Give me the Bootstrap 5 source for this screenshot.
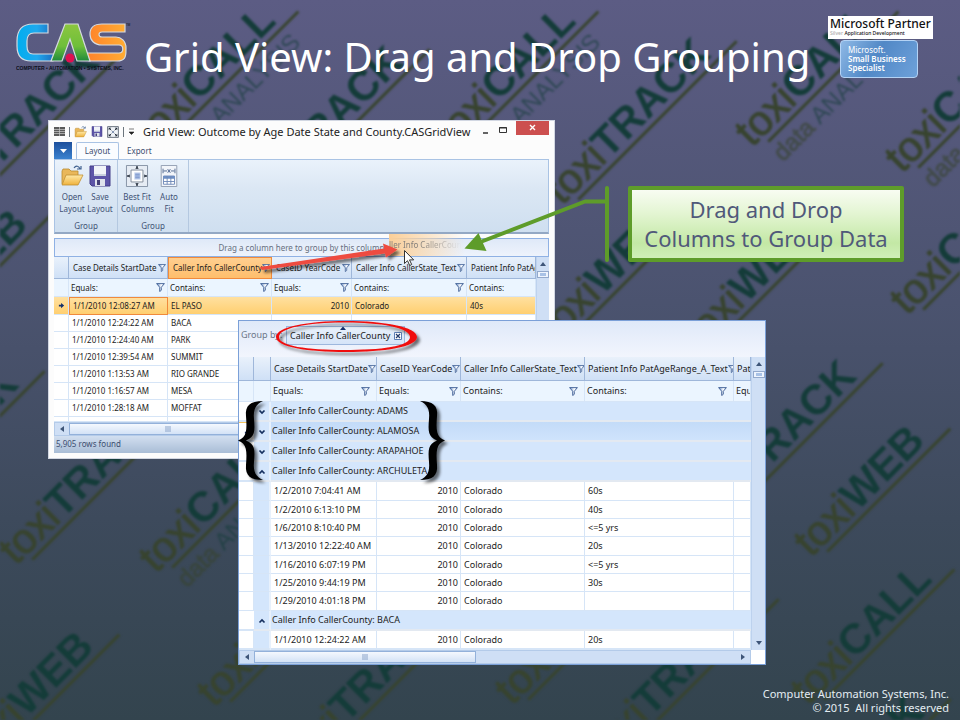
<!DOCTYPE html>
<html lang="en">
<head>
<meta charset="utf-8">
<meta name="viewport" content="width=device-width, initial-scale=1">
<title>Grid View: Drag and Drop Grouping</title>
<link href="https://cdn.jsdelivr.net/npm/bootstrap@5.3.0/dist/css/bootstrap.min.css" rel="stylesheet">
<style>
body{font-family:"Noto Sans","Open Sans",sans-serif;background:#34444f}
.slide{min-height:100vh;background:linear-gradient(#5c5c84,#4b536f 42%,#3d4a5c 72%,#33444e);isolation:isolate}
.watermark{inset:0;z-index:-1;pointer-events:none;filter:blur(1px)}
.wm-a{fill:#38442f;stroke:#38442f;stroke-width:1}
.wm-b{fill:#143c39;font-weight:700}
.wm-c{fill:#143c39}
.slide-head{padding:16px 27px 0 16px}
.slide-head h1{font-size:40px;line-height:50px;color:#fff;font-weight:400;margin:16px 0 0 12px}
.brand{margin-top:6px}
.partner{background:#fff;color:#111;width:105px;height:23px;padding:2px 2px 0;line-height:12px;font-size:12px;font-weight:500}
.partner small{display:block;font-size:5px;line-height:7px;font-weight:500}
.partner i{font-style:normal;color:#aaa}
.specialist{width:78px;height:38px;margin:1px auto 0 12px;padding:4px 7px;border:1px solid #b4d3f5;border-radius:4px;background:linear-gradient(120deg,#8fb9e6,#5188c6 45%,#6ea1da);color:#fff;font-size:8px;line-height:9px;font-weight:600}
.specialist span{font-weight:400}
.slide-foot{padding:0 11px 5px;color:#e4edf3;font-size:11px;line-height:14px}
.win{line-height:12px;color:#222}
.win-a{left:48px;top:120px;width:507px;background:#fcfcfc;border:1px solid #d2d7e2;padding:0 5px 5px;font-size:8px}
.win-b{left:238px;top:320px;width:528px;background:#fff;border:1px solid #7ba0d8;font-size:9px}
.win button{font:inherit;color:inherit}
.titlebar{height:21px}
.titlebar .caption{font-size:11px;color:#222}
.close-btn{background:#cc4f4f;width:33px;height:14px;color:#fff!important}
.tabs{height:17px;color:#3c4e70}
.start-btn{width:18px;background:linear-gradient(#1d4f9c,#3b82cf)}
.tab-on{width:43px;border:1px solid #a9c3e4!important;border-bottom:0!important;background:#fafcff!important;border-radius:2px 2px 0 0}
.ribbon{height:75px;background:linear-gradient(#eaf2fb,#dbe7f4 40%,#cfdff0);border:1px solid #a9c3e4;border-bottom:2px solid #93a8c4;color:#3f5275}
.ribbon-group{border-right:1px solid #b4c8e0;height:72px;padding:5px 3px 0}
.ribbon-group button{width:28px}
.ribbon-group.wide button{width:32px}
.dropzone{height:19px;line-height:17px;background:linear-gradient(#dfe9f8,#eef3fc);border:1px solid #8fb1e4;color:#666f80}
.ghost{left:389px;top:234px;width:76px;height:22px;line-height:22px;background:linear-gradient(90deg,#fbcf98,#fbd9ae88 60%,#fff0);color:#85807c;font-size:8px;overflow:hidden;white-space:nowrap}
.ghost span{-webkit-mask-image:linear-gradient(90deg,#000 40%,#0000 95%);mask-image:linear-gradient(90deg,#000 40%,#0000 95%)}
.data-grid{table-layout:fixed;width:100%;border-collapse:separate;border-spacing:0}
.data-grid th,.data-grid td{font-weight:400;padding:0 2px;white-space:nowrap;overflow:hidden;border-right:1px solid #d6e5f7;border-bottom:1px solid #d6e5f7;background:#fff;line-height:12px}
.data-grid th{height:22px;background:linear-gradient(#e9f1fb,#cfe0f6);border-color:#9fb7da;padding:0 1px 0 4px}
.data-grid svg{flex-shrink:0}
.data-grid tr.rec td{height:17px}
.win-b tr.rec td{height:18px}
.win-b tr.rec:nth-child(3n) td{height:19px}
.data-grid .num{text-align:right}
.data-grid .rec td:nth-child(n+2){padding-left:3px}
.win-a tr.current td{height:18px;background:linear-gradient(#ffe0a0,#ffcf70)}
.win-a tr.current td.focus-cell{border:1px solid #f08a3c}
.win-a th.picked{background:linear-gradient(#ffcf90,#ffbe6c);border:1px solid #f08a3c}
.data-grid tr.filters td{height:18px;background:#ebf5ff}
.win-b th{height:24px;padding:0 0 0 3px}
.win-b tr.filters td{height:21px}
.win-b tr.grp td{height:20px;background:#d4e6fc;border-right:0;border-bottom:2px solid #e3e9f1;padding-left:1px}
.win-b tr.grp.hot td{background:linear-gradient(#c3dbf8,#cfe3fc)}
.win-b td.tree,.win-b tr.grp td.tree{background:#d4e6fc;border-right:2px solid #e8f1fc;text-align:center;padding:0}
.win-b tr.grp td:first-child{background:#fff;border-bottom-color:#d6e5f7}
.win-b tr.grp.hot td:first-child{border-top:1px solid #f5c35c}
.win-b tr.grp.hot td:first-child svg{margin-left:4px}
.sliver td{height:5px;line-height:1px!important}
.win-b .sliver td{height:1px}
.vscroll{background:#cfdff5;width:13px;border-left:1px solid #bdd2ee}
.win-b .vscroll{width:14px}
.hscroll{height:14px;background:#cfdff5;border:1px solid #b4cbe9}
.thumb-h{height:12px;border:1px solid #93b1da;background:linear-gradient(#f4f8fe,#d3e2f6)}
.win-a .thumb-h{width:198px}
.win-b .thumb-h{width:222px}
.thumb-v{width:12px;height:7px;border:1px solid #93a9cc;background:#eef4fd}
.thumb-v::after{content:"";display:block;margin:1px 2px;height:3px;background:#a9c2e6}
.corner{width:14px;background:#fff}
.status{height:17px;background:linear-gradient(#d2dff0,#a9bdd6);color:#3c4e70;padding-left:2px;line-height:16px}
.grouppanel{height:36px;background:linear-gradient(#dfe9f9,#f2f5fd);color:#6b7688;padding-left:2px}
.chip{left:286px;top:326px;height:19px;padding:0 2px 0 3px;border:1px solid #9db7dd;background:linear-gradient(#e9f1fb,#d5e4f8);color:#222;font-size:9px;line-height:12px}
.callout{left:628px;top:186px;width:276px;border:4px solid #5e9c2a;border-radius:2px;background:linear-gradient(#f8fcf2,#e3f5d2 35%,#c3e8a5 78%,#d0efb8);color:#50597a;font-size:22px;line-height:29px;padding:5px 0}
.overlay{left:0;top:0;pointer-events:none}
</style>
<script src="https://cdn.jsdelivr.net/npm/bootstrap@5.3.0/dist/js/bootstrap.bundle.min.js"></script>
</head>
<body>
<svg width="0" height="0" class="position-absolute" aria-hidden="true">
  <defs>
    <linearGradient id="fold" x2="0" y2="1"><stop stop-color="#ffe9a6"/><stop offset="1" stop-color="#efb23c"/></linearGradient>
    <linearGradient id="fun" x2="1" y2="0"><stop stop-color="#5d86c4"/><stop offset=".6" stop-color="#fff"/><stop offset="1" stop-color="#9db9e2"/></linearGradient>
    <symbol id="funnel" viewBox="0 0 9 9"><path d="M.6.6h7.8L5.3 4.3v3L3.7 8.5V4.3z" fill="url(#fun)" stroke="#3f5f94" stroke-width=".9"/></symbol>
    <symbol id="folder" viewBox="0 0 24 22"><path d="M2 19V6l1-2h6l2 2h7v4" fill="#e9b75a" stroke="#b98a2e" stroke-width=".8"/><path d="M2 20L6 10h17l-5 10z" fill="url(#fold)" stroke="#c08f32" stroke-width=".8"/><path d="M14 3c2-3 5-2 6 1m-3 0h4V1" fill="none" stroke="#40618f" stroke-width="1.200"/></symbol>
    <symbol id="disk" viewBox="0 0 22 22"><path d="M1 1h20v20H3l-2-2z" fill="#5d55a8" stroke="#453e88"/><path d="M5 1h12v10H5z" fill="#f1f3f8"/><path d="M5 9h12v2H5z" fill="#c9d0de"/><path d="M6 14h10v7H6z" fill="#dfe3ec"/><path d="M8 15h3v5H8z" fill="#454078"/></symbol>
    <symbol id="bestfit" viewBox="0 0 24 24"><path d="M.5.5h23v23H.5z" fill="#e6ecf4" stroke="#7f8ca0"/><path d="M5.500 5.500h13v13h-13z" fill="#fff" stroke="#7d8796"/><path d="M9 8h7v8H9z" fill="#c9d7f0"/><path d="M10 10h5m-5 2h5m-5 2h5" stroke="#5f7fc0"/><path d="M12 1v3M12 20v3M1 12h3M20 12h3" stroke="#333c4a" stroke-width="1.600"/><path d="M10 4h4l-2-2zM10 20h4l-2 2zM4 10v4l-2-2zM20 10v4l2-2z" fill="#333c4a"/></symbol>
    <symbol id="autofit" viewBox="0 0 18 24"><path d="M.5.500h17v23H.5z" fill="#f2f5fa" stroke="#8d99ad"/><path d="M2.500 4v5M15.500 4v5M3 6.500h4M11 6.500h4M7.500 4.500l3 4m0-4l-3 4" stroke="#4b638d" fill="none"/><path d="M3 12h12v9H3z" fill="#fff" stroke="#6f89b8"/><path d="M3 12h12v3H3z" fill="#6d8ec4"/><path d="M3 18h12M7 12v9M11 12v9" stroke="#6f89b8"/></symbol>
    <symbol id="fourway" viewBox="0 0 14 14"><path d="M.7.7h12.6v12.6H.7z" fill="#eef2f7" stroke="#5a6270"/><path d="M3 3l2 2M11 3L9 5M3 11l2-2M11 11L9 9" stroke="#222a36" stroke-width="1.100"/><path d="M2 2h3L2 5zM12 2H9l3 3zM2 12h3L2 9zM12 12H9l3-3z" fill="#222a36"/><path d="M6 6h2v2H6z" fill="#4b638d"/></symbol>
    <symbol id="down" viewBox="0 0 8 8"><path d="M1.500 2.500L4 5l2.500-2.500" fill="none" stroke="#16305f" stroke-width="1.700"/></symbol>
    <symbol id="up" viewBox="0 0 8 8"><path d="M1.500 5.500L4 3l2.500 2.500" fill="none" stroke="#16305f" stroke-width="1.700"/></symbol>
    <symbol id="tri-l" viewBox="0 0 6 8"><path d="M5 1v6L1 4z" fill="#3e5578"/></symbol>
    <symbol id="tri-r" viewBox="0 0 6 8"><path d="M1 1v6l4-3z" fill="#3e5578"/></symbol>
    <symbol id="tri-u" viewBox="0 0 8 6"><path d="M1 5h6L4 1z" fill="#3e5578"/></symbol>
    <symbol id="tri-d" viewBox="0 0 8 6"><path d="M1 1h6L4 5z" fill="#3e5578"/></symbol>
    <symbol id="rowarrow" viewBox="0 0 8 8"><path d="M1 3h2.500V1L7 4 3.500 7V5H1z" fill="#14306c"/></symbol>
    <symbol id="grip" viewBox="0 0 6 6"><path d="M1 0v6M3 0v6M5 0v6" stroke="#8ba4c9"/></symbol>
    <g id="w-track"><text font-size="42"><tspan class="wm-a">toxi</tspan><tspan class="wm-b">TRACK</tspan></text><path d="M16 7H240" stroke="#38442f" stroke-width="3"/></g>
    <g id="w-web"><text font-size="42"><tspan class="wm-a">toxi</tspan><tspan class="wm-b">WEB</tspan></text><path d="M16 7H190" stroke="#38442f" stroke-width="3"/></g>
    <g id="w-call"><text font-size="42"><tspan class="wm-a">toxi</tspan><tspan class="wm-b">CALL</tspan></text><path d="M16 7H200" stroke="#38442f" stroke-width="3"/></g>
    <g id="w-data"><use href="#w-call"/><text y="32" x="12" font-size="24" opacity=".6"><tspan class="wm-a">data </tspan><tspan class="wm-c">ANALYSIS</tspan></text></g>
  </defs>
</svg>

<div class="slide position-relative d-flex flex-column overflow-hidden">
  <svg class="watermark position-absolute w-100 h-100" viewBox="0 0 960 720" preserveAspectRatio="xMidYMid slice" aria-hidden="true" font-family="Liberation Sans, sans-serif">
    <use href="#w-track" transform="translate(-49 214) rotate(-45)"/>
    <use href="#w-track" transform="translate(255 214) rotate(-45)"/>
    <use href="#w-track" transform="translate(562 206) rotate(-45)"/>
    <use href="#w-data" transform="translate(-148 148) rotate(-45)"/>
    <use href="#w-data" transform="translate(152 148) rotate(-45)"/>
    <use href="#w-data" transform="translate(452 148) rotate(-45)"/>
    <use href="#w-data" transform="translate(752 148) rotate(-45)"/>
    <use href="#w-data" transform="translate(902 174) rotate(-45)"/>
    <use href="#w-web" transform="translate(-86 342) rotate(-45)"/>
    <use href="#w-web" transform="translate(556 342) rotate(-45)"/>
    <use href="#w-web" transform="translate(700 350) rotate(-45)"/>
    <use href="#w-call" transform="translate(907 316) rotate(-45)"/>
    <use href="#w-track" transform="translate(708 528) rotate(-45)"/>
    <use href="#w-track" transform="translate(-130 536) rotate(-45)"/>
    <use href="#w-web" transform="translate(811 558) rotate(-45)"/>
    <use href="#w-track" transform="translate(16 566) rotate(-45)"/>
    <use href="#w-data" transform="translate(156 574) rotate(-45)"/>
    <use href="#w-web" transform="translate(-20 764) rotate(-45)"/>
    <use href="#w-call" transform="translate(214 708) rotate(-45)"/>
    <use href="#w-call" transform="translate(512 706) rotate(-45)"/>
    <use href="#w-track" transform="translate(604 764) rotate(-45)"/>
    <use href="#w-track" transform="translate(300 770) rotate(-45)"/>
    <use href="#w-call" transform="translate(808 706) rotate(-45)"/>
    <use href="#w-track" transform="translate(776 864) rotate(-45)"/>
  </svg>

  <header class="slide-head d-flex align-items-start">
    <svg class="brand flex-shrink-0" width="116" height="52" viewBox="0 0 116 52" role="img" aria-label="CAS Computer Automation Systems">
      <defs><linearGradient id="lb"><stop stop-color="#00aeef"/><stop offset=".5" stop-color="#1fa9ee"/><stop offset="1" stop-color="#1b62b8"/></linearGradient><linearGradient id="lo"><stop stop-color="#ff7f2a"/><stop offset="1" stop-color="#ffad33"/></linearGradient><linearGradient id="lg" x2="0" y2="1"><stop stop-color="#8cc63f"/><stop offset=".6" stop-color="#6fbf3a"/><stop offset="1" stop-color="#1f8a3c"/></linearGradient></defs>
      <g stroke="#d5dae0" stroke-width="1.200">
        <path d="M32 2H17C6 2 1 8 1 19v5c0 11 5 15 14 15h22l4-7H17c-4 0-6-3-6-8v-5c0-5 2-8 7-8h14z" fill="url(#lb)"/>
        <path d="M109 2H86c-8 0-12 4-12 10s4 11 12 11h17c5 0 5 8 0 8H68l5 8h28c8 0 9-4 9-11v-2c0-7-5-11-10-11H86c-4 0-4-5 0-5h23z" fill="url(#lo)"/>
        <path d="M49 2h13L74 39H61L54 17 46 39H35z" fill="url(#lg)"/>
      </g>
      <circle cx="54" cy="36" r="4.500" fill="#e01050"/>
      <text x="0" y="48" font-size="5" font-weight="700" fill="#0c0f1c" font-family="Liberation Sans, sans-serif">COMPUTER • AUTOMATION • SYSTEMS, INC.</text>
      <text x="110" y="4" font-size="3" fill="#111" font-family="Liberation Sans, sans-serif">TM</text>
    </svg>
    <h1 class="text-nowrap">Grid View: Drag and Drop Grouping</h1>
    <div class="ms-auto">
      <div class="partner text-nowrap">Microsoft Partner<small><i>Silver</i> Application Development</small></div>
      <div class="specialist text-nowrap"><span>Microsoft.</span><br>Small Business<br>Specialist</div>
    </div>
  </header>

  <section class="win win-a position-absolute" aria-label="Outcome grid">
    <div class="titlebar d-flex align-items-center">
      <svg width="11" height="9" class="flex-shrink-0"><path d="M0 0h11v9H0z" fill="#5a5a5a"/><path d="M0 2.500h11M0 4.500h11M0 6.500h11M5.500 0v9" stroke="#ccc" stroke-width=".7"/></svg>
      <span class="border-start border-secondary ms-1 me-1" style="height:10px"></span>
      <button class="btn p-0 border-0 lh-1" aria-label="Open"><svg width="13" height="12" class="d-block"><use href="#folder"/></svg></button>
      <button class="btn p-0 border-0 lh-1 ms-1" aria-label="Save"><svg width="12" height="11" class="d-block"><use href="#disk"/></svg></button>
      <button class="btn p-0 border-0 lh-1 ms-1" aria-label="Fit"><svg width="12" height="12" class="d-block"><use href="#fourway"/></svg></button>
      <span class="border-start border-secondary ms-1 me-1" style="height:10px"></span>
      <svg width="7" height="8" class="flex-shrink-0"><path d="M1 1h5M1 4h5L3.500 6.500z" fill="#222" stroke="#222" stroke-width=".6"/></svg>
      <span class="caption ms-2 text-nowrap">Grid View: Outcome by Age Date State and County.CASGridView</span>
      <button class="btn p-0 border-0 ms-auto lh-1" aria-label="Minimize"><svg width="8" height="8"><path d="M1 5h5" stroke="#333" stroke-width="1.500"/></svg></button>
      <button class="btn p-0 border-0 ms-2 me-2 lh-1 mb-1" aria-label="Maximize"><svg width="10" height="8"><path d="M1.500 1.500h7v5h-7zM1 2h8" fill="none" stroke="#333"/></svg></button>
      <button class="close-btn btn p-0 border-0 rounded-0 lh-1 align-self-start" aria-label="Close"><svg width="8" height="8"><path d="M1 1l5 5M6 1L1 6" stroke="#fff" stroke-width="1.400"/></svg></button>
    </div>
    <div class="tabs d-flex">
      <button class="start-btn border-0 p-0 lh-1" aria-label="Menu"><svg width="7" height="5"><path d="M0 0h7L3.500 4z" fill="#fff"/></svg></button>
      <button class="tab-on p-0 ms-1">Layout</button>
      <button class="border-0 bg-transparent p-0 ms-2">Export</button>
    </div>
    <div class="ribbon d-flex">
      <div class="ribbon-group d-flex flex-column">
        <div class="d-flex">
          <button class="border-0 bg-transparent p-0"><svg width="24" height="22" class="d-block mx-auto mb-1"><use href="#folder"/></svg>Open<br>Layout</button>
          <button class="border-0 bg-transparent p-0"><svg width="22" height="22" class="d-block mx-auto mb-1"><use href="#disk"/></svg>Save<br>Layout</button>
        </div>
        <div class="text-center mt-auto">Group</div>
      </div>
      <div class="ribbon-group wide d-flex flex-column">
        <div class="d-flex">
          <button class="border-0 bg-transparent p-0 text-nowrap"><svg width="24" height="22" class="d-block mx-auto mb-1"><use href="#bestfit"/></svg>Best Fit<br>Columns</button>
          <button class="border-0 bg-transparent p-0"><svg width="18" height="22" class="d-block mx-auto mb-1"><use href="#autofit"/></svg>Auto<br>Fit</button>
        </div>
        <div class="text-center mt-auto">Group</div>
      </div>
    </div>
    <div class="dropzone mt-1 text-center text-nowrap">Drag a column here to group by this column</div>
    <div class="d-flex">
      <table class="data-grid">
        <colgroup><col style="width:15px"><col style="width:99px"><col style="width:104px"><col style="width:80px"><col style="width:115px"><col></colgroup>
        <thead><tr>
          <th></th>
          <th scope="col"><div class="d-flex align-items-center justify-content-between">Case Details StartDate<svg width="8" height="8"><use href="#funnel"/></svg></div></th>
          <th scope="col" class="picked"><div class="d-flex align-items-center justify-content-between">Caller Info CallerCounty<svg width="8" height="8"><use href="#funnel"/></svg></div></th>
          <th scope="col"><div class="d-flex align-items-center justify-content-between">CaseID YearCode<svg width="8" height="8"><use href="#funnel"/></svg></div></th>
          <th scope="col"><div class="d-flex align-items-center justify-content-between">Caller Info CallerState_Text<svg width="8" height="8"><use href="#funnel"/></svg></div></th>
          <th scope="col">Patient Info PatAg</th>
        </tr></thead>
        <tbody>
          <tr class="filters"><td></td>
            <td><div class="d-flex align-items-center justify-content-between">Equals:<svg width="9" height="9"><use href="#funnel"/></svg></div></td>
            <td><div class="d-flex align-items-center justify-content-between">Contains:<svg width="9" height="9"><use href="#funnel"/></svg></div></td>
            <td><div class="d-flex align-items-center justify-content-between">Equals:<svg width="9" height="9"><use href="#funnel"/></svg></div></td>
            <td><div class="d-flex align-items-center justify-content-between">Contains:<svg width="9" height="9"><use href="#funnel"/></svg></div></td>
            <td>Contains:</td></tr>
          <tr class="rec current"><td class="text-center"><svg width="7" height="7" class="d-block mx-auto"><use href="#rowarrow"/></svg></td><td class="focus-cell">1/1/2010 12:08:27 AM</td><td>EL PASO</td><td class="num">2010</td><td>Colorado</td><td>40s</td></tr>
          <tr class="rec"><td></td><td>1/1/2010 12:24:22 AM</td><td>BACA</td><td></td><td></td><td></td></tr>
          <tr class="rec"><td></td><td>1/1/2010 12:24:40 AM</td><td>PARK</td><td></td><td></td><td></td></tr>
          <tr class="rec"><td></td><td>1/1/2010 12:39:54 AM</td><td>SUMMIT</td><td></td><td></td><td></td></tr>
          <tr class="rec"><td></td><td>1/1/2010 1:13:53 AM</td><td>RIO GRANDE</td><td></td><td></td><td></td></tr>
          <tr class="rec"><td></td><td>1/1/2010 1:16:57 AM</td><td>MESA</td><td></td><td></td><td></td></tr>
          <tr class="rec"><td></td><td>1/1/2010 1:28:18 AM</td><td>MOFFAT</td><td></td><td></td><td></td></tr>
          <tr class="sliver"><td></td><td></td><td></td><td></td><td></td><td></td></tr>
        </tbody>
      </table>
      <div class="vscroll d-flex flex-column align-items-center flex-shrink-0 pt-1"><svg width="8" height="6" class="mb-1 flex-shrink-0"><use href="#tri-u"/></svg><div class="thumb-v flex-shrink-0"></div></div>
    </div>
    <div class="hscroll d-flex align-items-center"><svg width="6" height="8" class="mx-1"><use href="#tri-l"/></svg><div class="thumb-h d-flex align-items-center justify-content-center"><svg width="6" height="6"><use href="#grip"/></svg></div></div>
    <div class="status">5,905 rows found</div>
  </section>

  <section class="win win-b position-absolute" aria-label="Grouped grid">
    <div class="grouppanel pt-2">Group by:</div>
    <div class="d-flex">
      <table class="data-grid">
        <colgroup><col style="width:15px"><col style="width:17px"><col style="width:106px"><col style="width:84px"><col style="width:124px"><col style="width:149px"><col></colgroup>
        <thead><tr>
          <th></th><th></th>
          <th scope="col"><div class="d-flex align-items-center justify-content-between">Case Details StartDate<svg width="8" height="8"><use href="#funnel"/></svg></div></th>
          <th scope="col"><div class="d-flex align-items-center justify-content-between">CaseID YearCode<svg width="8" height="8"><use href="#funnel"/></svg></div></th>
          <th scope="col"><div class="d-flex align-items-center justify-content-between">Caller Info CallerState_Text<svg width="8" height="8"><use href="#funnel"/></svg></div></th>
          <th scope="col"><div class="d-flex align-items-center justify-content-between">Patient Info PatAgeRange_A_Text<svg width="8" height="8"><use href="#funnel"/></svg></div></th>
          <th scope="col">Pat</th>
        </tr></thead>
        <tbody>
          <tr class="filters"><td></td><td></td>
            <td><div class="d-flex align-items-center justify-content-between">Equals:<svg width="9" height="9" class="me-1"><use href="#funnel"/></svg></div></td>
            <td><div class="d-flex align-items-center justify-content-between">Equals:<svg width="9" height="9"><use href="#funnel"/></svg></div></td>
            <td><div class="d-flex align-items-center justify-content-between">Contains:<svg width="9" height="9" class="me-1"><use href="#funnel"/></svg></div></td>
            <td><div class="d-flex align-items-center justify-content-between">Contains:<svg width="9" height="9" class="me-1"><use href="#funnel"/></svg></div></td>
            <td>Equ</td></tr>
          <tr class="grp"><td></td><td class="tree"><svg width="8" height="8"><use href="#down"/></svg></td><td colspan="5">Caller Info CallerCounty: ADAMS</td></tr>
          <tr class="grp hot"><td><svg width="7" height="7"><use href="#rowarrow"/></svg></td><td class="tree"><svg width="8" height="8"><use href="#down"/></svg></td><td colspan="5">Caller Info CallerCounty: ALAMOSA</td></tr>
          <tr class="grp"><td></td><td class="tree"><svg width="8" height="8"><use href="#down"/></svg></td><td colspan="5">Caller Info CallerCounty: ARAPAHOE</td></tr>
          <tr class="grp"><td></td><td class="tree"><svg width="8" height="8"><use href="#up"/></svg></td><td colspan="5">Caller Info CallerCounty: ARCHULETA</td></tr>
          <tr class="rec"><td></td><td class="tree"></td><td>1/2/2010 7:04:41 AM</td><td class="num">2010</td><td>Colorado</td><td>60s</td><td></td></tr>
          <tr class="rec"><td></td><td class="tree"></td><td>1/2/2010 6:13:10 PM</td><td class="num">2010</td><td>Colorado</td><td>40s</td><td></td></tr>
          <tr class="rec"><td></td><td class="tree"></td><td>1/6/2010 8:10:40 PM</td><td class="num">2010</td><td>Colorado</td><td>&lt;=5 yrs</td><td></td></tr>
          <tr class="rec"><td></td><td class="tree"></td><td>1/13/2010 12:22:40 AM</td><td class="num">2010</td><td>Colorado</td><td>20s</td><td></td></tr>
          <tr class="rec"><td></td><td class="tree"></td><td>1/16/2010 6:07:19 PM</td><td class="num">2010</td><td>Colorado</td><td>&lt;=5 yrs</td><td></td></tr>
          <tr class="rec"><td></td><td class="tree"></td><td>1/25/2010 9:44:19 PM</td><td class="num">2010</td><td>Colorado</td><td>30s</td><td></td></tr>
          <tr class="rec"><td></td><td class="tree"></td><td>1/29/2010 4:01:18 PM</td><td class="num">2010</td><td>Colorado</td><td></td><td></td></tr>
          <tr class="grp"><td></td><td class="tree"><svg width="8" height="8"><use href="#up"/></svg></td><td colspan="5">Caller Info CallerCounty: BACA</td></tr>
          <tr class="rec"><td></td><td class="tree"></td><td>1/1/2010 12:24:22 AM</td><td class="num">2010</td><td>Colorado</td><td>20s</td><td></td></tr>
          <tr class="sliver"><td></td><td class="tree"></td><td></td><td></td><td></td><td></td><td></td></tr>
        </tbody>
      </table>
      <div class="vscroll d-flex flex-column align-items-center flex-shrink-0 py-1"><svg width="8" height="6" class="mb-1 flex-shrink-0"><use href="#tri-u"/></svg><div class="thumb-v flex-shrink-0"></div><svg width="8" height="6" class="mt-auto flex-shrink-0"><use href="#tri-d"/></svg></div>
    </div>
    <div class="d-flex">
      <div class="hscroll d-flex align-items-center flex-grow-1"><svg width="6" height="8" class="mx-1"><use href="#tri-l"/></svg><div class="thumb-h d-flex align-items-center justify-content-center"><svg width="6" height="6"><use href="#grip"/></svg></div><svg width="6" height="8" class="ms-auto me-1"><use href="#tri-r"/></svg></div>
      <div class="corner"></div>
    </div>
  </section>

  <div class="ghost position-absolute"><span class="d-block">ller Info CallerCounty</span></div>
  <div class="chip position-absolute d-flex align-items-center text-nowrap">Caller Info CallerCounty<button class="border-0 bg-transparent p-0 ms-1 lh-1" aria-label="Remove grouping"><svg width="8" height="8" class="d-block"><path d="M.500.500h7v7h-7z" fill="#fff" stroke="#5b7db5"/><path d="M2 2l4 4M6 2L2 6" stroke="#223a6b" stroke-width="1.200"/></svg></button></div>
  <div class="callout position-absolute text-center text-nowrap">Drag and Drop<br>Columns to Group Data</div>

  <svg class="overlay position-absolute" width="960" height="720" aria-hidden="true">
    <defs><filter id="sh" x="-20%" y="-20%" width="150%" height="150%"><feDropShadow dx="3" dy="3" stdDeviation="1.500" flood-color="#000" flood-opacity=".55"/></filter></defs>
    <path d="M607 188v72M607 201.500H585L483 241" fill="none" stroke="#5e9c2a" stroke-width="4" stroke-linecap="round" stroke-linejoin="round"/>
    <path d="M464.500 248.500L478.500 233 486.500 251z" fill="#5e9c2a"/>
    <g filter="url(#sh)"><path d="M260 267L384 248.500 383 243.500 397.500 249.500 386 257.500 385 253.500 262 270z" fill="#ee4b40"/></g>
    <path d="M404.500 250.500v13l3-2.800 2.200 4.800 2-1-2.200-4.600h4.200z" fill="#fff" stroke="#333"/>
    <path d="M340 330h6l-3-3.500z" fill="#14306c"/>
    <g filter="url(#sh)"><path fill-rule="evenodd" fill="#f00d0d" d="M346 321c-38 0-70 6-70 16s32 15 70 15 71-5 71-15-33-16-71-16zm-2 1.500c37 0 66 5 66 14.500s-29 13-66 13-65-4-65-13 28-14.500 65-14.500z"/></g>
    <g filter="url(#sh)" fill="#050505">
      <path d="M263 401C250 401 245 406 246 416 247 430 247 437 238 440.500 247 444 247 451 246 465 245 476 251 480 263 480 256 477 253 472 254 462 255 450 255 444 246 440.500 255 437 255 431 254 419 253 409 256 404 263 401z"/>
      <path transform="translate(683) scale(-1 1)" d="M263 401C250 401 245 406 246 416 247 430 247 437 238 440.500 247 444 247 451 246 465 245 476 251 480 263 480 256 477 253 472 254 462 255 450 255 444 246 440.500 255 437 255 431 254 419 253 409 256 404 263 401z"/>
    </g>
  </svg>

  <footer class="slide-foot mt-auto text-end">Computer Automation Systems, Inc.<br>© 2015&nbsp; All rights reserved</footer>
</div>
</body>
</html>
